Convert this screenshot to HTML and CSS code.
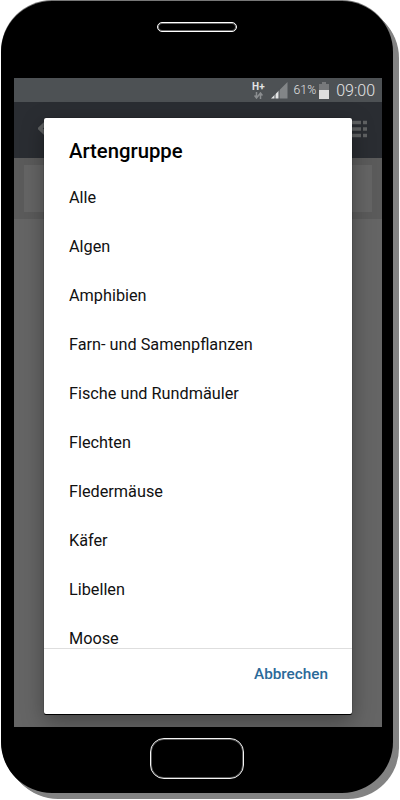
FILE: index.html
```html
<!DOCTYPE html>
<html lang="de">
<head>
    <meta charset="UTF-8">
    <meta name="viewport" content="width=device-width, initial-scale=1.0">
    <title>Artengruppe</title>
    <link rel="stylesheet" href="styles.css">
</head>
<body>
    <div class="phone">
        <div class="phone-top">
            <div class="speaker"></div>
        </div>

        <div class="screen">
            <!-- Status bar -->
            <div class="status-bar">
                <div class="network">
                    <span>H+</span>
                    <svg width="9" height="7" viewBox="0 0 9 7">
                        <path d="M2.5 0v5M.5 3.5l2 2.5 2-2.5M6.5 7V2M4.5 3.5l2-2.5 2 2.5" fill="none" stroke="#8b8e90" stroke-width="1.5"/>
                    </svg>
                </div>
                <svg class="signal" width="17" height="17" viewBox="0 0 17 17">
                    <path d="M0 16.5L8 8.5V16.5z" fill="#e3e4e5"/>
                    <path d="M8 8.5L16.5 0V16.5H8z" fill="#828587"/>
                    <path d="M4 8v9M8 6v11" stroke="#4d5154" stroke-width="1"/>
                </svg>
                <span class="percent">61%</span>
                <svg class="battery" width="10" height="17" viewBox="0 0 10 17">
                    <path d="M3 0h4v2h3v6H0V2h3z" fill="#77797b"/>
                    <path d="M0 8h10v9H0z" fill="#dedede"/>
                </svg>
                <span class="clock">09:00</span>
            </div>

            <!-- Page behind the dialog -->
            <div class="toolbar">
                <svg width="20" height="18" viewBox="0 0 20 18">
                    <path d="M9 2L2 8.500L9 15" fill="none" stroke="#606263" stroke-width="4"/>
                </svg>
                <svg width="23" height="18" viewBox="0 0 23 18">
                    <path d="M0 2.500h17M19 2.500h4M0 9h17M19 9h4M0 15.500h17M19 15.500h4" stroke="#606263" stroke-width="3.500"/>
                </svg>
            </div>
            <div class="search">
                <div class="search-field"></div>
            </div>
            <div class="content"></div>

            <!-- Selection dialog -->
            <div class="dialog">
                <h2 class="dialog-title">Artengruppe</h2>
                <ul class="options">
                    <li>Alle</li>
                    <li>Algen</li>
                    <li>Amphibien</li>
                    <li>Farn- und Samenpflanzen</li>
                    <li>Fische und Rundmäuler</li>
                    <li>Flechten</li>
                    <li>Fledermäuse</li>
                    <li>Käfer</li>
                    <li>Libellen</li>
                    <li>Moose</li>
                </ul>
                <div class="dialog-actions">
                    <button class="cancel">Abbrechen</button>
                </div>
            </div>
        </div>

        <div class="phone-bottom">
            <div class="home-button"></div>
        </div>
    </div>
</body>
</html>
```

FILE: styles.css
```css
* {
    box-sizing: border-box;
}

body {
    margin: 0;
    padding: 1px;
    height: 800px;
    overflow: hidden;
    background-color: #ffffff;
    font-family: Roboto, "Liberation Sans", sans-serif;
}

/* Phone case */
.phone {
    display: flex;
    flex-direction: column;
    width: 392px;
    height: 792px;
    padding: 0 11px 0 13px;
    border-radius: 51px;
    background-color: #000000;
    box-shadow: 0 -1px 0 #777777, 1px 1px 0 #838383, 2px 2px 0 #838383, 3px 3px 0 #838383, 4px 4px 0 #838383, 5px 5px 0 #838383, 6px 6px 0 #838383;
}

.phone-top {
    display: flex;
    justify-content: center;
    height: 77px;
    padding-top: 21px;
    padding-right: 3px;
}

.speaker {
    width: 80px;
    height: 10px;
    border: 1px solid #ffffff;
    border-radius: 5px;
    box-shadow: inset 0 0 0 1px #666666;
}

.phone-bottom {
    display: flex;
    justify-content: center;
    padding-top: 11px;
    padding-right: 3px;
}

.home-button {
    width: 94px;
    height: 41px;
    border: 1px solid #f4f4f4;
    border-radius: 14px;
    box-shadow: inset 0 0 0 1px #555555;
}

/* Screen */
.screen {
    position: relative;
    display: flex;
    flex-direction: column;
    height: 649px;
    overflow: hidden;
    background-color: #656565;
}

.status-bar {
    display: flex;
    align-items: center;
    justify-content: flex-end;
    height: 24px;
    padding-right: 7px;
    background-color: #4d5154;
    color: #e3e4e5;
}

.network {
    display: flex;
    flex-direction: column;
    align-items: center;
    margin-right: 6px;
    font-size: 10px;
    font-weight: 700;
    line-height: 10px;
}

.signal {
    margin-right: 6px;
}

.percent {
    margin-right: 3px;
    font-size: 12.2px;
    font-weight: 300;
}

.battery {
    margin-right: 7px;
}

.clock {
    font-size: 16px;
    font-weight: 300;
}

.toolbar {
    display: flex;
    align-items: center;
    justify-content: space-between;
    height: 56px;
    padding: 0 15px 2px 24px;
    background-color: #2a2d32;
}

.search {
    height: 61px;
    padding: 7px 10px;
    background-color: #5b5b5b;
}

.search-field {
    height: 47px;
    background-color: #656565;
}

.content {
    flex: 1;
}

/* Dialog */
.dialog {
    position: absolute;
    top: 40px;
    left: 30px;
    display: flex;
    flex-direction: column;
    width: 308px;
    height: 596px;
    border-radius: 2px;
    background-color: #ffffff;
    box-shadow: 0 0 1px #000000, 0 1px 0 #000000, 0 7px 22px rgba(0, 0, 0, 0.35);
}

.dialog-title {
    margin: 0;
    padding: 20px 25px 0;
    height: 55px;
    font-size: 20.3px;
    font-weight: 500;
    line-height: 26px;
    color: #000000;
}

.options {
    height: 475px;
    margin: 0;
    padding: 0;
    overflow: hidden;
    list-style: none;
}

.options li {
    height: 49px;
    padding-left: 25px;
    font-size: 16.25px;
    line-height: 50px;
    color: #111111;
}

.dialog-actions {
    display: flex;
    flex: 1;
    align-items: flex-start;
    justify-content: flex-end;
    padding: 15px 24px 0;
    border-top: 1px solid #dedede;
}

.cancel {
    padding: 0;
    border: none;
    background: none;
    font-family: inherit;
    font-size: 15.3px;
    font-weight: 500;
    line-height: 20px;
    color: #2b6a99;
}
```
